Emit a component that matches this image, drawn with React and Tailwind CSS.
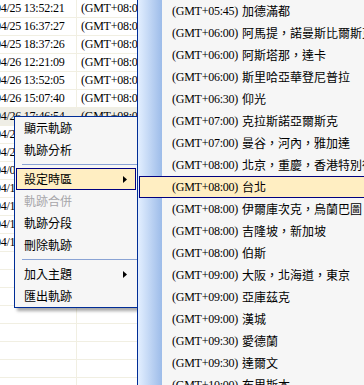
const rows = [
  ['04/25 13:52:21', '(GMT+08:00) 台北'],
  ['04/25 16:37:27', '(GMT+08:00) 台北'],
  ['04/25 18:37:26', '(GMT+08:00) 台北'],
  ['04/26 12:21:09', '(GMT+08:00) 台北'],
  ['04/26 13:52:05', '(GMT+08:00) 台北'],
  ['04/26 15:07:40', '(GMT+08:00) 台北'],
  ['04/26 17:46:54', '(GMT+08:00) 台北'],
  ['04/27 09:12:33', '(GMT+08:00) 台北'],
  ['04/28 10:45:18', '(GMT+08:00) 台北'],
  ['04/05 08:30:02', '(GMT+08:00) 台北'],
  ['04/12 14:20:11', '(GMT+08:00) 台北'],
  ['04/13 09:58:47', '(GMT+08:00) 台北'],
  ['04/15 16:03:29', '(GMT+08:00) 台北'],
  ['04/18 11:41:56', '(GMT+08:00) 台北'],
];

const zones = [
  ['(GMT+05:45)', '加德滿都'],
  ['(GMT+06:00)', '阿馬提，諾曼斯比爾斯克'],
  ['(GMT+06:00)', '阿斯塔那，達卡'],
  ['(GMT+06:00)', '斯里哈亞華登尼普拉'],
  ['(GMT+06:30)', '仰光'],
  ['(GMT+07:00)', '克拉斯諾亞爾斯克'],
  ['(GMT+07:00)', '曼谷，河內，雅加達'],
  ['(GMT+08:00)', '北京，重慶，香港特別行政區，烏魯木齊'],
  ['(GMT+08:00)', '台北'],
  ['(GMT+08:00)', '伊爾庫次克，烏蘭巴圖'],
  ['(GMT+08:00)', '吉隆坡，新加坡'],
  ['(GMT+08:00)', '伯斯'],
  ['(GMT+09:00)', '大阪，北海道，東京'],
  ['(GMT+09:00)', '亞庫茲克'],
  ['(GMT+09:00)', '漢城'],
  ['(GMT+09:30)', '愛德蘭'],
  ['(GMT+09:30)', '達爾文'],
  ['(GMT+10:00)', '布里斯本'],
];

const menu = [
  { label: '顯示軌跡' },
  { label: '軌跡分析' },
  { sep: true },
  { label: '設定時區', sub: true, active: true },
  { label: '軌跡合併', disabled: true },
  { label: '軌跡分段' },
  { label: '刪除軌跡' },
  { sep: true },
  { label: '加入主題', sub: true },
  { label: '匯出軌跡' },
];

function Arrow() {
  return (
    <svg width="4" height="7" viewBox="0 0 4 7" className="mr-[8px] shrink-0">
      <path d="M0 0 L4 3.5 L0 7 Z" fill="#000" />
    </svg>
  );
}

export default function App() {
  const empty = Array.from({ length: 22 - rows.length }, () => ['', '']);

  return (
    <div className="relative h-[385px] w-[364px] overflow-hidden bg-white font-['Liberation_Serif','Noto_Sans_CJK_TC',serif] text-[12px] tracking-[-0.25px] text-black">
      {/* list view behind the menus */}
      <div className="flex flex-col">
        {[...rows, ...empty].map(([date, zone], i) => (
          <div
            key={i}
            className={`flex h-[18px] border-b border-[#f1efe2] leading-[17px] ${i === 6 ? 'bg-[#efeee6]' : ''}`}
          >
            <div className="w-[77px] shrink-0 overflow-hidden whitespace-nowrap border-r border-[#f1efe2]">
              <span className="ml-[-5px] inline-block">{date}</span>
            </div>
            <div className="overflow-hidden whitespace-nowrap pl-[4px]">{zone}</div>
          </div>
        ))}
      </div>

      {/* context menu */}
      <div className="absolute left-[14px] top-[116px] w-[124px] border border-[#002d96] bg-[#f6f6f6] shadow-[3px_3px_3px_rgba(0,0,0,0.35)] font-['Noto_Sans_CJK_TC',sans-serif] tracking-normal">
        {menu.map((item, i) =>
          item.sep ? (
            <div key={i} className="flex h-[7px] items-center pl-[7px]">
              <div className="h-px w-full bg-[#8aa3d4]" />
            </div>
          ) : (
            <div
              key={i}
              className={`mx-[1px] flex h-[22px] items-center border pl-[7px] leading-[20px] ${
                item.active ? 'border-[#000080] bg-[#ffeec2]' : 'border-transparent'
              } ${item.disabled ? 'text-[#a7a6aa]' : 'text-black'}`}
            >
              <span className="flex-1">{item.label}</span>
              {item.sub && <Arrow />}
            </div>
          )
        )}
      </div>

      {/* time zone submenu */}
      <div className="absolute left-[137px] top-0 h-[400px] w-[260px] border-l border-[#002d96] bg-[#f6f6f6] bg-[linear-gradient(to_right,#e3efff,#9dbce9)] bg-[length:24px_100%] bg-no-repeat">
        {zones.map(([gmt, name], i) => (
          <div
            key={i}
            className={`ml-[1px] flex h-[22px] items-center whitespace-nowrap border pl-[32px] leading-[20px] ${
              i === 8 ? 'border-[#000080] bg-[#ffeec2]' : 'border-transparent'
            }`}
          >
            <span>{gmt}</span>
            <span className="ml-[4px] font-['Noto_Sans_CJK_TC',sans-serif] tracking-normal">{name}</span>
          </div>
        ))}
      </div>
    </div>
  );
}
